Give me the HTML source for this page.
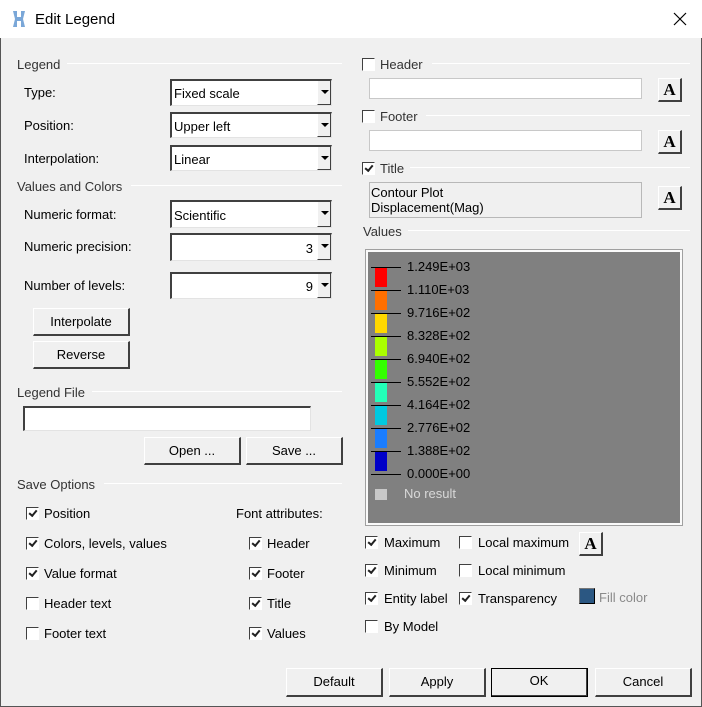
<!DOCTYPE html>
<html><head><meta charset="utf-8">
<style>
*{box-sizing:border-box;margin:0;padding:0}
body{width:702px;height:707px;background:#f0f0f0;font-family:"Liberation Sans",Arial,sans-serif;font-size:13px;color:#000;position:relative;overflow:hidden}
.a{position:absolute;white-space:nowrap}
.t{position:absolute;white-space:nowrap;line-height:16px;margin-top:1px}
.title{position:absolute;left:0;top:0;width:702px;height:38px;background:#fff}
.grp{position:absolute;height:1px;background:#a0a0a0;border-bottom:1px solid #fff}
.combo{position:absolute;background:#fff;border-top:2px solid #404040;border-left:2px solid #404040;border-right:1px solid #e3e3e3;border-bottom:1px solid #e3e3e3}
.arr{position:absolute;right:0;top:0;bottom:0;width:14px;background:#f0f0f0;border-left:1px solid #fff;border-right:1px solid #404040;border-bottom:1px solid #404040}
.arr:after{content:"";position:absolute;left:3px;top:9px;border-left:4px solid transparent;border-right:4px solid transparent;border-top:4px solid #000}
.btn{position:absolute;background:#f0f0f0;border-top:1px solid #fff;border-left:1px solid #fff;border-right:2px solid #404040;border-bottom:2px solid #404040;text-align:center;line-height:25px}
.inp{position:absolute;background:#fff;border:1px solid #c8c8c8}
.cb{position:absolute;width:13px;height:13px;background:#fff;border-top:1px solid #404040;border-left:1px solid #404040;border-right:1px solid #fff;border-bottom:1px solid #fff}
.cb.c:after{content:"";position:absolute;left:2px;top:2px;width:6px;height:3px;border-left:2px solid #222;border-bottom:2px solid #222;transform:rotate(-50deg)}
.abtn{position:absolute;width:24px;height:24px;background:#f0f0f0;border-top:1px solid #fff;border-left:1px solid #fff;border-right:2px solid #404040;border-bottom:2px solid #404040;font-family:"Liberation Serif",serif;font-weight:bold;font-size:17px;text-align:center;line-height:21px}
.lg{position:absolute;left:366px;top:250px;width:316px;height:275px;background:#808080;border:2px solid #fafafa;outline:1px solid #a0a0a0}
.ln{position:absolute;left:3px;width:30px;height:1px;background:#000}
.bar{position:absolute;left:7px;width:12px}
.lv{position:absolute;left:39px;font-size:13px;line-height:14px;color:#000}
</style></head><body>
<div class="title"></div>
<svg class="a" style="left:11px;top:10px" width="16" height="18" viewBox="0 0 16 18"><path d="M2 1 L6 1 L6 7 L10 7 L10 1 L14 1 L12 9 L14 17 L10 17 L10 11 L6 11 L6 17 L2 17 L4 9 Z" fill="#7aa7d8"/></svg>
<div class="t" style="left:35px;top:10px;font-size:15px;line-height:18px">Edit Legend</div>
<svg class="a" style="left:673px;top:12px" width="14" height="14"><path d="M1 1L13 13M13 1L1 13" stroke="#000" stroke-width="1.2"/></svg>
<div class="a" style="left:0;top:38px;width:1px;height:669px;background:#555"></div>
<div class="a" style="left:701px;top:38px;width:1px;height:669px;background:#555"></div>

<!-- Left -->
<div class="t" style="left:17px;top:56px;color:#333">Legend</div><div class="grp" style="left:67px;top:63px;width:275px"></div>
<div class="t" style="left:24px;top:84px">Type:</div>
<div class="combo" style="left:170px;top:79px;width:162px;height:27px"><span class="t" style="left:2px;top:4px">Fixed scale</span><div class="arr"></div></div>
<div class="t" style="left:24px;top:117px">Position:</div>
<div class="combo" style="left:170px;top:112px;width:162px;height:26px"><span class="t" style="left:2px;top:4px">Upper left</span><div class="arr"></div></div>
<div class="t" style="left:24px;top:150px">Interpolation:</div>
<div class="combo" style="left:170px;top:145px;width:162px;height:26px"><span class="t" style="left:2px;top:4px">Linear</span><div class="arr"></div></div>
<div class="t" style="left:17px;top:178px;color:#333">Values and Colors</div><div class="grp" style="left:131px;top:185px;width:211px"></div>
<div class="t" style="left:24px;top:206px">Numeric format:</div>
<div class="combo" style="left:170px;top:200px;width:162px;height:28px"><span class="t" style="left:2px;top:5px">Scientific</span><div class="arr"></div></div>
<div class="t" style="left:24px;top:238px">Numeric precision:</div>
<div class="combo" style="left:170px;top:233px;width:162px;height:28px"><span class="t" style="right:18px;top:5px">3</span><div class="arr"></div></div>
<div class="t" style="left:24px;top:277px">Number of levels:</div>
<div class="combo" style="left:170px;top:272px;width:162px;height:27px"><span class="t" style="right:18px;top:4px">9</span><div class="arr"></div></div>
<div class="btn" style="left:33px;top:308px;width:97px;height:28px">Interpolate</div>
<div class="btn" style="left:33px;top:341px;width:97px;height:28px">Reverse</div>
<div class="t" style="left:17px;top:384px;color:#333">Legend File</div><div class="grp" style="left:92px;top:391px;width:250px"></div>
<div class="combo" style="left:23px;top:406px;width:288px;height:25px"></div>
<div class="btn" style="left:144px;top:437px;width:97px;height:28px">Open ...</div>
<div class="btn" style="left:246px;top:437px;width:97px;height:28px">Save ...</div>
<div class="t" style="left:17px;top:476px;color:#333">Save Options</div><div class="grp" style="left:104px;top:483px;width:238px"></div>

<div class="cb c" style="left:26px;top:507px"></div><div class="t" style="left:44px;top:505px">Position</div>
<div class="cb c" style="left:26px;top:537px"></div><div class="t" style="left:44px;top:535px">Colors, levels, values</div>
<div class="cb c" style="left:26px;top:567px"></div><div class="t" style="left:44px;top:565px">Value format</div>
<div class="cb" style="left:26px;top:597px"></div><div class="t" style="left:44px;top:595px">Header text</div>
<div class="cb" style="left:26px;top:627px"></div><div class="t" style="left:44px;top:625px">Footer text</div>
<div class="t" style="left:236px;top:505px">Font attributes:</div>
<div class="cb c" style="left:249px;top:537px"></div><div class="t" style="left:267px;top:535px">Header</div>
<div class="cb c" style="left:249px;top:567px"></div><div class="t" style="left:267px;top:565px">Footer</div>
<div class="cb c" style="left:249px;top:597px"></div><div class="t" style="left:267px;top:595px">Title</div>
<div class="cb c" style="left:249px;top:627px"></div><div class="t" style="left:267px;top:625px">Values</div>

<!-- Right -->
<div class="cb" style="left:362px;top:58px"></div><div class="t" style="left:380px;top:56px;color:#333">Header</div><div class="grp" style="left:432px;top:63px;width:258px"></div>
<div class="inp" style="left:369px;top:78px;width:273px;height:21px"></div>
<div class="abtn" style="left:658px;top:78px">A</div>
<div class="cb" style="left:362px;top:110px"></div><div class="t" style="left:380px;top:108px;color:#333">Footer</div><div class="grp" style="left:426px;top:115px;width:264px"></div>
<div class="inp" style="left:369px;top:130px;width:273px;height:21px"></div>
<div class="abtn" style="left:658px;top:130px">A</div>
<div class="cb c" style="left:362px;top:162px"></div><div class="t" style="left:380px;top:160px;color:#333">Title</div><div class="grp" style="left:410px;top:167px;width:280px"></div>
<div class="inp" style="left:369px;top:182px;width:273px;height:36px;background:#f0f0f0;border-color:#b8b8b8"><div class="t" style="left:1px;top:1px">Contour Plot</div><div class="t" style="left:1px;top:16px">Displacement(Mag)</div></div>
<div class="abtn" style="left:658px;top:186px">A</div>
<div class="t" style="left:363px;top:223px;color:#333">Values</div><div class="grp" style="left:408px;top:230px;width:282px"></div>

<div class="lg">
 <div class="bar" style="top:15px;height:20px;background:#ff0000"></div>
 <div class="bar" style="top:38px;height:20px;background:#ff6f00"></div>
 <div class="bar" style="top:61px;height:20px;background:#ffd800"></div>
 <div class="bar" style="top:84px;height:20px;background:#aaff00"></div>
 <div class="bar" style="top:107px;height:20px;background:#33ff00"></div>
 <div class="bar" style="top:130px;height:20px;background:#23ffb8"></div>
 <div class="bar" style="top:153px;height:20px;background:#00c9e0"></div>
 <div class="bar" style="top:176px;height:20px;background:#1a7dff"></div>
 <div class="bar" style="top:199px;height:20px;background:#0000c8"></div>
 <div class="ln" style="top:15px"></div><div class="lv" style="top:8px">1.249E+03</div>
 <div class="ln" style="top:38px"></div><div class="lv" style="top:31px">1.110E+03</div>
 <div class="ln" style="top:61px"></div><div class="lv" style="top:54px">9.716E+02</div>
 <div class="ln" style="top:84px"></div><div class="lv" style="top:77px">8.328E+02</div>
 <div class="ln" style="top:107px"></div><div class="lv" style="top:100px">6.940E+02</div>
 <div class="ln" style="top:130px"></div><div class="lv" style="top:123px">5.552E+02</div>
 <div class="ln" style="top:153px"></div><div class="lv" style="top:146px">4.164E+02</div>
 <div class="ln" style="top:176px"></div><div class="lv" style="top:169px">2.776E+02</div>
 <div class="ln" style="top:199px"></div><div class="lv" style="top:192px">1.388E+02</div>
 <div class="ln" style="top:222px"></div><div class="lv" style="top:215px">0.000E+00</div>
 <div class="bar" style="top:237px;height:11px;background:#c8c8c8"></div>
 <div class="lv" style="left:36px;top:235px;color:#d8d8d8">No result</div>
</div>

<div class="cb c" style="left:365px;top:536px"></div><div class="t" style="left:384px;top:534px">Maximum</div>
<div class="cb" style="left:459px;top:536px"></div><div class="t" style="left:478px;top:534px">Local maximum</div>
<div class="abtn" style="left:579px;top:532px">A</div>
<div class="cb c" style="left:365px;top:564px"></div><div class="t" style="left:384px;top:562px">Minimum</div>
<div class="cb" style="left:459px;top:564px"></div><div class="t" style="left:478px;top:562px">Local minimum</div>
<div class="cb c" style="left:365px;top:592px"></div><div class="t" style="left:384px;top:590px">Entity label</div>
<div class="cb c" style="left:459px;top:592px"></div><div class="t" style="left:478px;top:590px">Transparency</div>
<div class="a" style="left:579px;top:588px;width:16px;height:16px;background:#2b5782;border-top:1px solid #777;border-left:1px solid #777;border-right:1px solid #000;border-bottom:1px solid #000"></div>
<div class="t" style="left:599px;top:589px;color:#8a8a8a">Fill color</div>
<div class="cb" style="left:365px;top:620px"></div><div class="t" style="left:384px;top:618px">By Model</div>

<div class="btn" style="left:286px;top:668px;width:97px;height:29px;line-height:26px">Default</div>
<div class="btn" style="left:389px;top:668px;width:97px;height:29px;line-height:26px">Apply</div>
<div class="btn" style="left:491px;top:668px;width:97px;height:29px;line-height:24px;outline:1px solid #000;outline-offset:-1px">OK</div>
<div class="btn" style="left:595px;top:668px;width:97px;height:29px;line-height:26px">Cancel</div>
<div class="a" style="left:0;top:706px;width:702px;height:1px;background:#555"></div>
</body></html>
